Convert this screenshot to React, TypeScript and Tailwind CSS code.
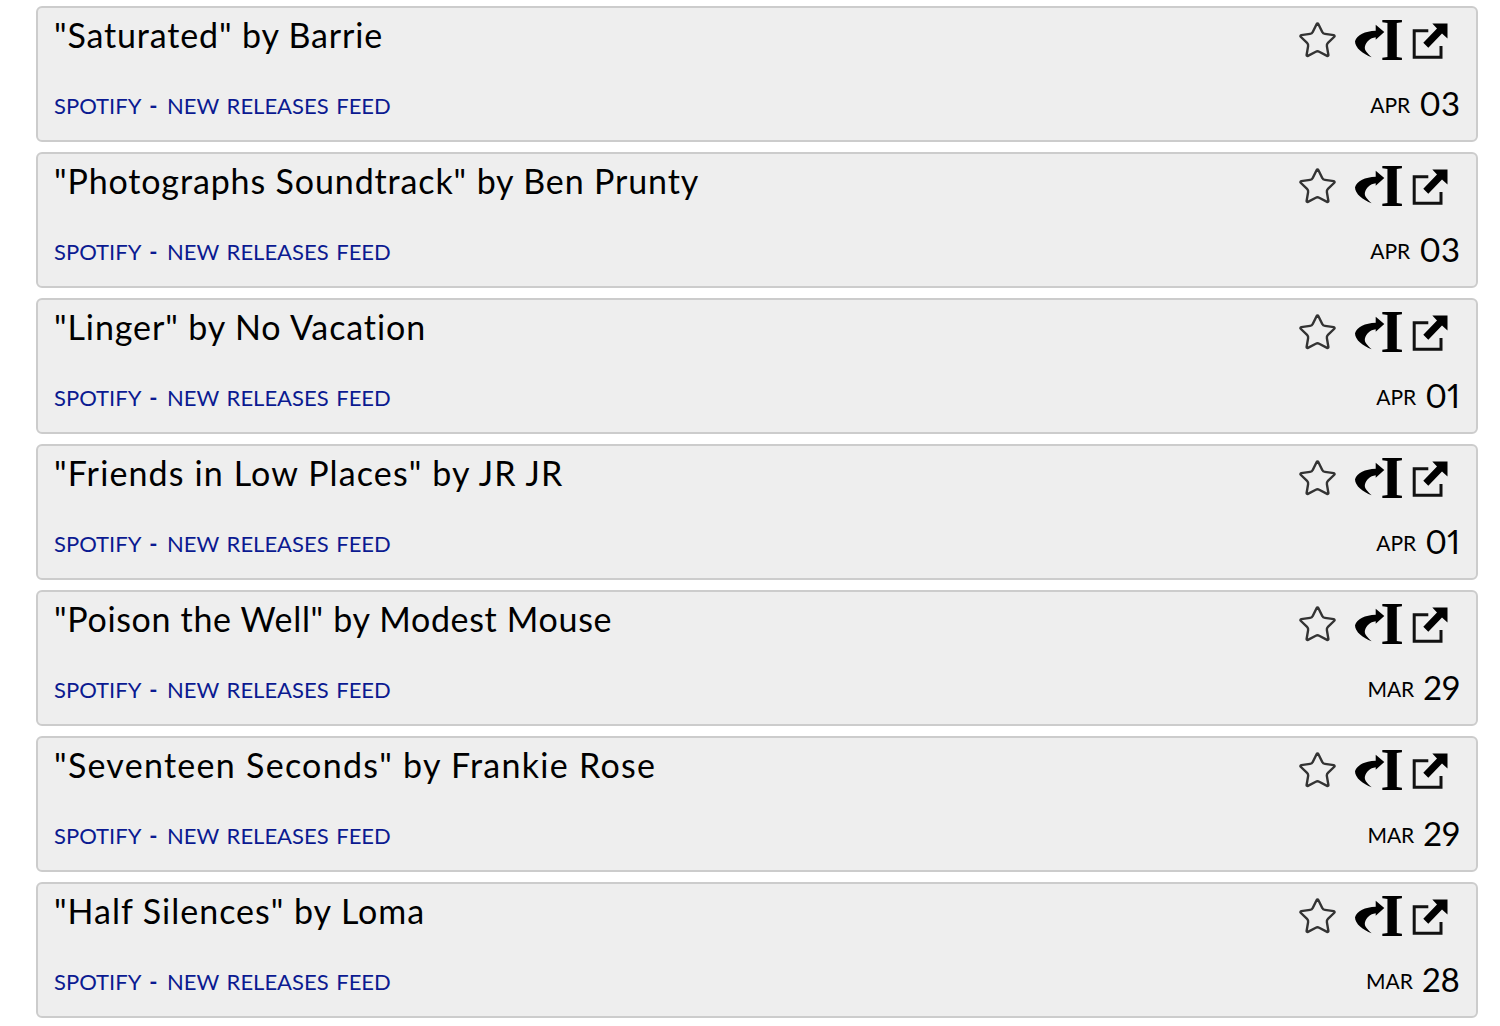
import React from 'react';
import { Star } from 'lucide-react';

const items = [
  { title: '"Saturated" by Barrie', month: 'APR', day: '03', spacing: 'tracking-[0.85px]' },
  { title: '"Photographs Soundtrack" by Ben Prunty', month: 'APR', day: '03', spacing: 'tracking-[0.87px]' },
  { title: '"Linger" by No Vacation', month: 'APR', day: '01', spacing: 'tracking-[0.9px]' },
  { title: '"Friends in Low Places" by JR JR', month: 'APR', day: '01', spacing: 'tracking-[1.13px]' },
  { title: '"Poison the Well" by Modest Mouse', month: 'MAR', day: '29', spacing: 'tracking-[0.67px]' },
  { title: '"Seventeen Seconds" by Frankie Rose', month: 'MAR', day: '29', spacing: 'tracking-[1.28px]' },
  { title: '"Half Silences" by Loma', month: 'MAR', day: '28', spacing: 'tracking-[0.98px]' },
];

function ReplyIcon() {
  return (
    <svg width="30" height="36" viewBox="0 0 30 36" className="shrink-0">
      <path d="M29.3 9 L20.7 1.7 V7.7 C10 8 2 12 0 18.3 C0 25 8 31 16.7 34.3 C12 30 9 27 10 23.3 C11 19 15 15 20.7 14.3 V16.7 Z" fill="#000" />
    </svg>
  );
}

function ExternalIcon() {
  return (
    <svg width="36" height="36" viewBox="0 0 36 36" className="shrink-0">
      <path d="M16.3 7.8 H2.2 V34.2 H29 V23" fill="none" stroke="#111" strokeWidth="3" />
      <path d="M35.5 0.5 H20.3 L25 5.5 L11.3 19.7 L16.3 24.7 L30 10.5 L35.5 15.5 Z" fill="#000" />
    </svg>
  );
}

function FeedCard({ title, month, day, spacing }: { title: string; month: string; day: string; spacing: string }) {
  return (
    <div className="h-[136px] rounded-md border-2 border-[#cccccc] bg-[#eeeeee] pl-4 pr-[16px] flex justify-between">
      <div className="flex flex-col">
        <div className={`mt-[2px] text-[34px] leading-[50px] text-black ${spacing}`}>{title}</div>
        <div className="mt-[30px] text-[22px] leading-8 text-[#0b1a91] whitespace-pre [word-spacing:2px]">
          SPOTIFY <span className="font-bold ml-[1px] mr-[2px]">-</span> NEW RELEASES FEED
        </div>
      </div>
      <div className="flex flex-col items-end">
        <div className="mt-[11px] flex items-center h-[44px] text-black">
          <Star size={41} strokeWidth={1.4} color="#333" className="mr-[17px] mb-[2px]" />
          <ReplyIcon />
          <span className="mb-[2px] font-['Liberation_Serif',serif] font-bold text-[61px] leading-[44px] -ml-[5px]">I</span>
          <span className="ml-2 mr-[12px]"><ExternalIcon /></span>
        </div>
        <div className="mt-[20px] h-10 flex items-center gap-[9px] text-black [font-variant-numeric:proportional-nums]">
          <span className="text-[21px] leading-8 mt-[4px]">{month}</span>
          <span className="text-[33px] leading-10">{day}</span>
        </div>
      </div>
    </div>
  );
}

export default function App() {
  return (
    <div className="font-['Lato',sans-serif] bg-white min-h-[1026px] pt-[6px] pl-9 pr-[22px] flex flex-col gap-[10px]">
      {items.map((item, i) => (
        <FeedCard key={i} {...item} />
      ))}
    </div>
  );
}
